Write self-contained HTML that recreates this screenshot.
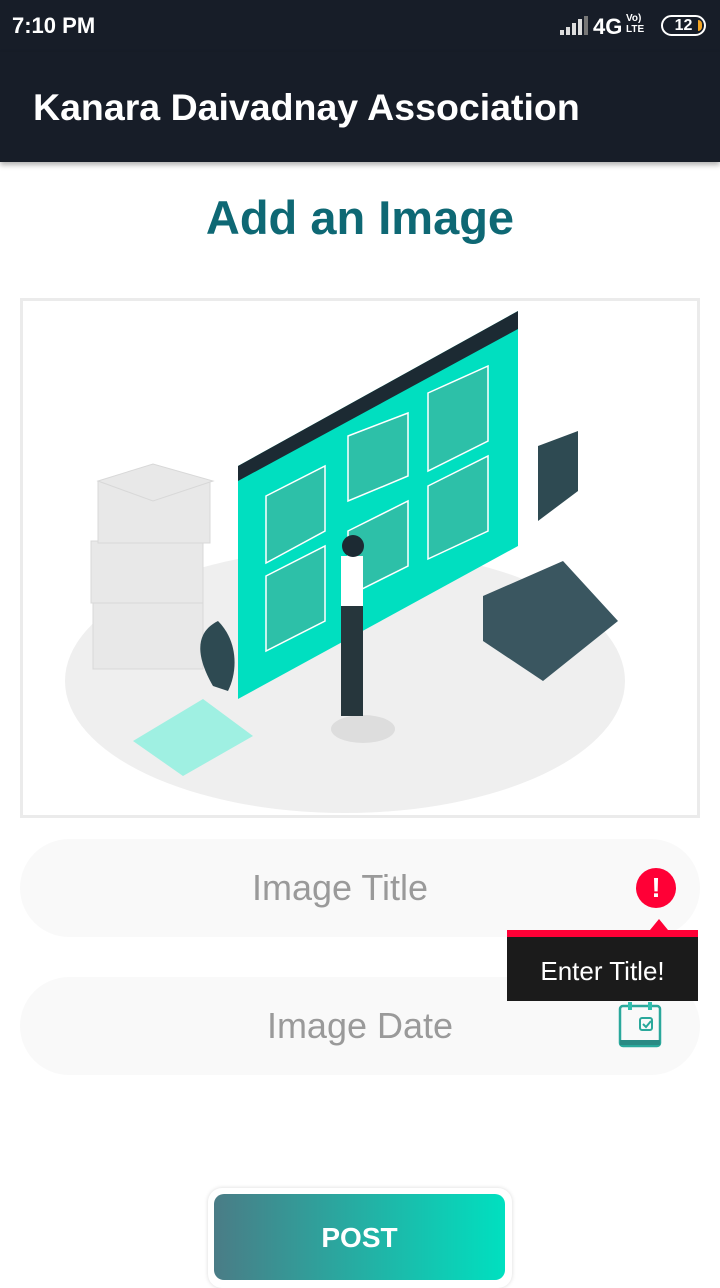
<!DOCTYPE html>
<html><head><meta charset="utf-8"><style>
*{margin:0;padding:0;box-sizing:border-box}
body{width:720px;height:1280px;background:#fff;font-family:"Liberation Sans",sans-serif;position:relative;overflow:hidden}
.status{position:absolute;top:0;left:0;width:720px;height:52px;background:#171d28;color:#fff}
.bar{position:absolute;top:52px;left:0;width:720px;height:110px;background:#171d28;box-shadow:0 3px 5px rgba(0,0,0,.3)}
.abs{position:absolute}
.field{position:absolute;left:20px;width:680px;height:98px;border-radius:49px;background:#f9f9f9;color:#9a9a9a;font-size:36px;line-height:98px}
</style></head><body>
<div class="status">
<div class="abs" style="left:12px;top:13px;font-size:22px;font-weight:bold">7:10 PM</div>
<svg class="abs" style="left:560px;top:16px" width="30" height="20"><rect x="0" y="14" width="4" height="5" fill="#ddd"/><rect x="6" y="11" width="4" height="8" fill="#ddd"/><rect x="12" y="7" width="4" height="12" fill="#ddd"/><rect x="18" y="3" width="4" height="16" fill="#ddd"/><rect x="24" y="0" width="4" height="19" fill="#777"/></svg>
<div class="abs" style="left:593px;top:14px;font-size:22px;font-weight:bold">4G</div>
<div class="abs" style="left:626px;top:13px;font-size:10px;font-weight:bold;line-height:11px">Vo)<br>LTE</div>
<div class="abs" style="left:661px;top:15px;width:45px;height:21px;border:2px solid #fff;border-radius:11px;font-size:16px;font-weight:bold;text-align:center;line-height:17px">12</div>
<div class="abs" style="left:698px;top:20px;width:4px;height:11px;background:#f5a623;border-radius:0 5px 5px 0"></div>
</div>
<div class="bar"><div class="abs" style="left:33px;top:34px;font-size:37.5px;font-weight:bold;color:#fff">Kanara Daivadnay Association</div></div>
<div class="abs" style="left:0;top:190px;width:720px;text-align:center;font-size:47px;font-weight:bold;color:#0e6874">Add an Image</div>
<div class="abs" style="left:20px;top:298px;width:680px;height:520px;border:3px solid #ebebeb"></div>
<svg class="abs" style="left:23px;top:301px" width="674" height="514">
<ellipse cx="322" cy="380" rx="280" ry="132" fill="#efefef"/>
<g fill="#e8e8e8" stroke="#d8d8d8"><rect x="70" y="300" width="110" height="68"/><rect x="68" y="240" width="112" height="62"/><rect x="75" y="180" width="112" height="62"/><polygon points="75,180 130,163 190,180 130,200"/></g>
<polygon points="215,165 495,10 495,245 215,398" fill="#00dfc0"/>
<polygon points="215,165 495,10 495,28 215,180" fill="#1c2a33"/>
<g fill="#2dc0a8" stroke="#fff" stroke-width="1.5"><polygon points="243,195 302,165 302,230 243,262"/><polygon points="325,135 385,112 385,175 325,200"/><polygon points="405,92 465,65 465,140 405,170"/><polygon points="243,275 302,245 302,320 243,350"/><polygon points="325,230 385,200 385,265 325,295"/><polygon points="405,185 465,155 465,230 405,258"/></g>
<polygon points="515,145 555,130 555,190 515,220" fill="#2e4a52"/>
<polygon points="460,295 540,260 595,320 520,380 460,340" fill="#3a5660"/>
<polygon points="110,440 180,398 230,435 160,475" fill="#9ff0e2"/>
<ellipse cx="340" cy="428" rx="32" ry="14" fill="#ddd"/>
<rect x="318" y="255" width="22" height="55" fill="#fff"/><rect x="318" y="305" width="22" height="110" fill="#26363c"/>
<circle cx="330" cy="245" r="11" fill="#1c2a33"/>
<path d="M190,385 C170,350 175,330 195,320 C215,340 215,370 205,390Z" fill="#2e4a52"/>
</svg>
<div class="field" style="top:839px;text-align:center;padding-right:40px">Image Title</div>
<div class="abs" style="left:636px;top:868px;width:40px;height:40px;border-radius:50%;background:#ff0036;color:#fff;font-weight:bold;font-size:28px;text-align:center;line-height:40px">!</div>
<div class="field" style="top:977px;text-align:center">Image Date</div>
<div class="abs" style="left:650px;top:919px;width:0;height:0;border-left:9px solid transparent;border-right:9px solid transparent;border-bottom:11px solid #ff0036"></div>
<div class="abs" style="left:507px;top:930px;width:191px;height:7px;background:#ff0036"></div>
<div class="abs" style="left:507px;top:937px;width:191px;height:64px;background:#1b1b1b;color:#fff;font-size:26px;text-align:center;line-height:68px">Enter Title!</div>
<svg class="abs" style="left:618px;top:1002px" width="44" height="46"><rect x="2" y="4" width="40" height="40" rx="3" fill="none" stroke="#2aa89b" stroke-width="2.5"/><rect x="2" y="38" width="40" height="5" fill="#2a8a84"/><rect x="10" y="0" width="4" height="8" fill="#2fbfae"/><rect x="30" y="0" width="4" height="8" fill="#2fbfae"/><rect x="22" y="16" width="12" height="12" rx="2" fill="none" stroke="#2aa89b" stroke-width="2"/><path d="M25 22l3 3 5-6" fill="none" stroke="#2aa89b" stroke-width="2"/></svg>
<div class="abs" style="left:208px;top:1188px;width:304px;height:100px;border-radius:14px;background:#fff;box-shadow:0 0 4px rgba(0,0,0,.15)"></div>
<div class="abs" style="left:214px;top:1194px;width:291px;height:86px;border-radius:10px;background:linear-gradient(90deg,#4a7c86,#00e0c0);color:#fff;font-size:28px;font-weight:bold;text-align:center;line-height:88px">POST</div>
</body></html>
